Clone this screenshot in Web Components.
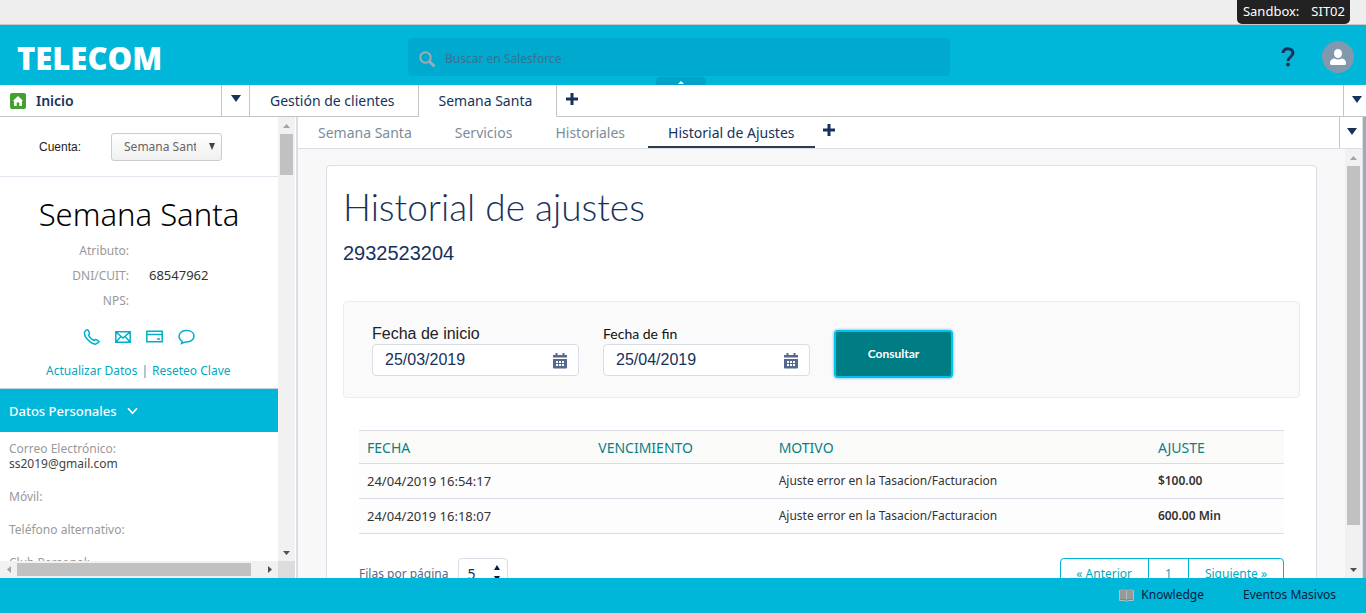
<!DOCTYPE html>
<html lang="es">
<head>
<meta charset="utf-8">
<title>Historial de ajustes</title>
<style>
html,body{margin:0;height:100%}
body{font-family:"Noto Sans","Open Sans",sans-serif;font-size:12px;color:#16325c;
--brand:#00b6d9;--line:#d8dde6;--navy:#16325c;--link:#00a9c0}
</style>
</head>
<body>
<console-app></console-app>
<script>
const base = '*,*::before{box-sizing:border-box}button,input,select{font:inherit;color:inherit;margin:0}button{background:none;border:0;padding:0}a{color:inherit;text-decoration:none}';
function define(name, css, html, setup) {
  const t = document.createElement('template');
  t.innerHTML = `<style>${base}${css}</style>${html}`;
  customElements.define(name, class extends HTMLElement {
    constructor() {
      super();
      this.attachShadow({mode: 'open'}).append(t.content.cloneNode(true));
    }
    connectedCallback() { if (setup) setup(this, this.shadowRoot); }
  });
}

define('down-arrow', ':host{display:block;width:10px;height:7px}svg{display:block}',
  '<svg width="10" height="7" viewBox="0 0 10 7"><path d="M0 0h10L5 7z" fill="#16325c"/></svg>');

define('plus-mark', ':host{display:block;width:12px;height:12px}svg{display:block}',
  '<svg width="12" height="12" viewBox="0 0 12 12"><path d="M4.500 0h3v4.500H12v3H7.500V12h-3V7.500H0v-3h4.500z" fill="#16325c"/></svg>');

define('scroll-bar', `
:host{display:flex;flex-direction:column;width:17px;background:#f1f1f1}
:host([axis=x]){flex-direction:row;width:auto;height:17px}
svg{flex:none;display:block;width:17px;height:17px}
.track{flex:1;display:flex;flex-direction:column;padding:0 2px;min-height:0}
:host([axis=x]) .track{flex-direction:row;padding:2px 0}
.thumb{background:#c1c1c1;flex:0 0 var(--thumb,50%)}
:host([axis=x]) .a,:host([axis=x]) .b{transform:rotate(-90deg)}`,
`<svg class="a" viewBox="0 0 17 17"><path d="M5 11h7L8.500 7z" fill="#a3a3a3"/></svg><div class="track"><div class="thumb"></div></div><svg class="b" viewBox="0 0 17 17"><path d="M5 7h7l-3.500 4z" fill="#505050"/></svg>`);

define('sandbox-strip', `
:host{display:flex;justify-content:flex-end;height:25px;padding-right:16px;background:#eee;border-bottom:1px solid #c9c9c9}
div{display:flex;gap:12px;height:24px;padding:0 5px 0 6px;background:#222;color:#fff;border-radius:0 0 5px 5px;font-size:13px;line-height:23px}`,
`<div><span>Sandbox:</span><span>SIT02</span></div>`);

define('app-header', `
:host{display:grid;grid-template-columns:408px minmax(200px,542px) 1fr;height:60px;background:var(--brand);position:relative;align-items:center}
.logo{padding:5px 0 0 17px;font:800 31px/54px "Open Sans","Noto Sans",sans-serif;color:#fff}
.search{display:flex;align-items:center;gap:9px;height:38px;margin-top:4px;padding-left:11px;background:#00aacf;border-radius:4px}
input{flex:1;border:0;background:none;outline:0;padding:0;height:38px;padding-top:3px}
input::placeholder{color:#39708f;opacity:1}
.search svg{margin-top:4px}
.right{display:flex;justify-content:flex-end;align-items:center;gap:27px;padding:4px 12px 0 0}
.right svg{display:block}
.notch{position:absolute;left:656px;bottom:0;width:50px;height:8px;padding-bottom:1px;background:#00a3c6;border-radius:4px 4px 0 0;display:flex;justify-content:center;align-items:flex-end}`,
`<div class="logo">TELECOM</div>
<label class="search"><svg width="17" height="17" viewBox="0 0 17 17" fill="none" stroke="#9faab5"><circle cx="6.500" cy="6.500" r="5.200" stroke-width="2"/><path d="M10.500 10.500l5 5" stroke-width="2.800"/></svg><input type="search" aria-label="Buscar" placeholder="Buscar en Salesforce"></label>
<div class="right"><button aria-label="Ayuda"><svg width="14" height="20" viewBox="0 0 14 20"><path d="M2 6C2 0 12 .5 12 6c0 3.500-5 3.800-5 8" fill="none" stroke="#16325c" stroke-width="3"/><circle cx="7" cy="17.500" r="2" fill="#16325c"/></svg></button>
<button aria-label="Perfil"><svg width="32" height="32" viewBox="0 0 32 32"><circle cx="16" cy="16" r="16" fill="#8199af"/><ellipse cx="16" cy="12.500" rx="4" ry="4.500" fill="#fff"/><path d="M8 22c0-3 2.500-4.500 4.500-4.500 2 1.200 5 1.200 7 0 2 0 4.500 1.500 4.500 4.500 0 1.500-.5 2-2 2H10c-1.500 0-2-.5-2-2z" fill="#fff"/></svg></button></div>
<div class="notch"><svg width="6" height="3" viewBox="0 0 6 3"><path d="M0 3l3-3 3 3z" fill="#fff"/></svg></div>`);

define('main-tabs', `
:host{display:flex;height:32px;font-size:14px;line-height:31px}
a,button{border-bottom:1px solid #c4c4c4;border-right:1px solid #c4c4c4;background:#fff}
.home{display:flex;align-items:center;gap:10px;width:222px;padding-left:10px;font-weight:600}
.pick{width:28px;display:flex;justify-content:center;align-items:center;padding-bottom:5px}
.tab{padding:0 23px 0 20px}
.tab.on{border-bottom-color:#fff;padding-right:24px}
.add{flex:1;padding:8px 9px 0;border-right:1px solid #c4c4c4;display:flex;align-items:flex-start}
.end{border-right:0;width:22px;display:flex;align-items:center;justify-content:flex-end;padding:0 4px 3px 0}`,
`<a class="home" href="#"><svg width="16" height="16" viewBox="0 0 16 16"><rect width="16" height="16" rx="2" fill="#43a12f"/><path d="M8 3l5.200 5H12v5H9.300V9.500H6.700V13H4V8H2.800z" fill="#fff"/></svg>Inicio</a>
<button class="pick" aria-label="Elegir"><down-arrow></down-arrow></button>
<a class="tab" href="#">Gestión de clientes</a><a class="tab on" href="#">Semana Santa</a>
<button class="add" aria-label="Nueva pestaña"><plus-mark></plus-mark></button>
<button class="end" aria-label="Más pestañas"><down-arrow></down-arrow></button>`);

define('sub-tabs', `
:host{display:flex;height:32px;border-bottom:1px solid var(--line);background:#fff;font-size:14px;line-height:32px;color:#7d8c9b}
a{margin:0 3px 0 0;padding:0 20px;height:31px}
a.on{color:var(--navy);border-bottom:2px solid #2f3c50}
.add{flex:1;padding:7px 5px 0;display:flex;align-items:flex-start}
.end{width:23px;border-left:1px solid #c4c4c4;display:flex;align-items:center;justify-content:center;padding:0 0 3px 2px}`,
`<a href="#">Semana Santa</a><a href="#">Servicios</a><a href="#">Historiales</a><a class="on" href="#">Historial de Ajustes</a>
<button class="add" aria-label="Nueva subpestaña"><plus-mark></plus-mark></button>
<button class="end" aria-label="Más"><down-arrow></down-arrow></button>`);

define('data-field', `
:host{display:block;padding-left:9px;line-height:15px;color:#444;margin-bottom:18px}
.l{color:#999}`,
`<div class="l"><slot name="label"></slot></div><div><slot></slot></div>`);

define('account-panel', `
:host{display:grid;grid-template-columns:1fr 17px;grid-template-rows:1fr 17px;width:298px;flex:none;border-right:2px solid var(--line);padding-right:1px;background:#fff;min-height:0}
.body{overflow:hidden;min-height:0}
.pick{display:flex;align-items:center;height:60px;padding-left:39px;gap:30px;border-bottom:1px solid #e0e5ee;font-family:"Liberation Sans",sans-serif;color:#222}
.sel{position:relative}
select{appearance:none;display:block;width:111px;height:28px;border:1px solid #ccc;border-radius:3px;background:linear-gradient(#fff,#f0f0f0);padding:0 25px 0 12px;font-family:"Noto Sans",sans-serif;color:#666}
.sel svg{position:absolute;right:6px;top:10px;pointer-events:none}
h1{margin:17px 0 8px;font-weight:300;font-size:31px;line-height:41px;color:#000;text-align:center}
dl{display:grid;grid-template-columns:129px 1fr;column-gap:20px;row-gap:10px;line-height:15px;margin:0;color:#333}
dt{text-align:right;color:#999}dd{margin:0;min-height:15px;font-size:13px}
.icons{display:flex;justify-content:center;gap:15px;margin:20px 0 16px;height:18px}
.icons svg{display:block}
.links{display:flex;padding-left:46px;color:var(--link);line-height:18px;gap:4px;margin-bottom:8px}
h2{margin:0;display:flex;align-items:center;gap:10px;height:44px;padding-left:9px;border-top:1px solid #c9d3dd;background:var(--brand);color:#fff;font-size:13px;font-weight:500}
.fields{padding-top:9px}
.corner{background:#dcdcdc}`,
`<div class="body">
<div class="pick"><label for="acc">Cuenta:</label><div class="sel"><select id="acc"><option>Semana Santa</option></select><svg width="8" height="7" viewBox="0 0 8 7"><path d="M1 0h6L4 7z" fill="#444"/></svg></div></div>
<h1>Semana Santa</h1>
<dl><dt>Atributo:</dt><dd></dd><dt>DNI/CUIT:</dt><dd>68547962</dd><dt>NPS:</dt><dd></dd></dl>
<div class="icons">
<svg width="17" height="18" viewBox="0 0 17 18" fill="none" stroke="#00b0c8" stroke-width="1.500"><path d="M3.500 2L1.600 3.800C.6 8.500 7 15.800 12.500 16.200l3-1.700c.7-.6.500-1.200 0-1.600l-2.500-1.300c-.8-.3-1.200 0-1.800.9C8.500 11.500 6.500 9.500 5.500 7c1.200-.6 1.300-1 1-1.900L5.300 2.500C4.900 1.600 4.200 1.400 3.500 2z"/></svg>
<svg width="16" height="18" viewBox="0 0 16 18" fill="none" stroke="#00b0c8" stroke-width="1.500"><path d="M.8 3.800h14.400v10.500H.8zM1 4l7 6 7-6M1 14l5-5.500M15 14l-5-5.500"/></svg>
<svg width="17" height="18" viewBox="0 0 17 18" fill="none" stroke="#00b0c8" stroke-width="1.500"><path d="M.8 3.300h15.400v10.400H.8zM1 6.500h15M11 11h3"/></svg>
<svg width="17" height="18" viewBox="0 0 17 18" fill="none" stroke="#00b0c8" stroke-width="1.500"><path d="M4.200 13.300C-1 10 .5 2.500 8.500 2.500c5 0 7.500 2.800 7.500 5.800 0 3.700-4 6.200-8.500 5.600L3.500 15.500z"/></svg></div>
<div class="links"><a href="#">Actualizar Datos</a><span>|</span><a href="#">Reseteo Clave</a></div>
<h2>Datos Personales <svg width="11" height="8" viewBox="0 0 11 8"><path d="M1 1.200l4.500 5 4.500-5" fill="none" stroke="#fff" stroke-width="1.700"/></svg></h2>
<div class="fields"><data-field><span slot="label">Correo Electrónico:</span>ss2019@gmail.com</data-field><data-field><span slot="label">Móvil:</span></data-field><data-field><span slot="label">Teléfono alternativo:</span></data-field><data-field><span slot="label">Club Personal:</span></data-field></div>
</div><scroll-bar style="--thumb:10%"></scroll-bar><scroll-bar axis="x" style="--thumb:96%"></scroll-bar><div class="corner"></div>`);

define('date-field', `
:host{display:block;width:207px}
label{display:block;font:16px/20px "Liberation Sans",sans-serif;color:#222}
:host([compact]) label{font:14px/20px Lato,sans-serif;color:#111}
.box{display:flex;align-items:center;height:32px;border:1px solid var(--line);border-radius:4px;background:#fff;padding:0 11px 0 12px}
input{flex:1;min-width:0;border:0;outline:0;padding:0;height:28px;font:16px/28px "Liberation Sans",sans-serif;color:#16325c;background:none}
svg{flex:none;margin-top:2px}`,
`<label for="d"></label><div class="box"><input id="d" type="text"><svg width="14" height="16" viewBox="0 0 14 16"><path fill="#54698d" fill-rule="evenodd" d="M2.500 0h2v2h5V0h2v2H14v2.500H0V2h2.500zM0 6h14v8.500q0 1-1 1H1q-1 0-1-1zM3 8v2h2V8zM6 8v2h2V8zM9 8v2h2V8zM3 11v2h2v-2zM6 11v2h2v-2zM9 11v2h2v-2z"/></svg></div>`,
(el, r) => { r.querySelector('label').textContent = el.getAttribute('label'); r.querySelector('input').value = el.getAttribute('value'); });

define('adjust-table', `
:host{display:block;margin:32px 16px 0}
table{width:100%;table-layout:fixed;border-collapse:collapse;border-top:1px solid var(--line);background:#fdfdfd;color:#333}
th{height:33px;padding:0 8px;text-align:left;font-weight:400;font-size:14px;color:#0b7f86;background:#fafaf9;border-bottom:1px solid var(--line)}
td{height:35px;padding:0 8px 1px;border-bottom:1px solid var(--line)}
td:first-child{font-size:13px}
td:last-child{font-weight:600}`,
`<table><colgroup><col style="width:25%"><col style="width:19.500%"><col style="width:41%"><col></colgroup><thead><tr><th>FECHA</th><th>VENCIMIENTO</th><th>MOTIVO</th><th>AJUSTE</th></tr></thead>
<tbody><tr><td>24/04/2019 16:54:17</td><td></td><td>Ajuste error en la Tasacion/Facturacion</td><td>$100.00</td></tr>
<tr><td>24/04/2019 16:18:07</td><td></td><td>Ajuste error en la Tasacion/Facturacion</td><td>600.00 Min</td></tr></tbody></table>`);

define('table-pager', `
:host{display:flex;justify-content:space-between;align-items:flex-start;margin:24px 16px 0}
.rows{display:flex;align-items:center;gap:10px;line-height:32px;color:#54698d}
.num{display:flex;align-items:center;justify-content:space-between;width:50px;height:32px;border:1px solid var(--line);border-radius:4px;padding:0 6px 0 8px;background:#fff}
input{width:16px;height:28px;border:0;outline:0;padding:0;background:none;color:#16325c;font-size:14px;line-height:28px}
nav{display:flex;border:1px solid var(--brand);border-radius:4px;line-height:30px;color:var(--link)}
nav a{padding:0 16px 0 15px}
nav a+a{padding-left:16px;border-left:1px solid var(--brand)}`,
`<div class="rows"><label for="n">Filas por página</label><div class="num"><input id="n" type="text" value="5"><svg width="8" height="18" viewBox="0 0 8 18"><path d="M1 5h6L4 0zM1 11h6l-3 5z" fill="#061c3f"/></svg></div></div>
<nav><a href="#">« Anterior</a><a href="#">1</a><a href="#">Siguiente »</a></nav>`);

define('history-card', `
:host{display:block;margin:16px 28px 0;padding:16px;background:#fff;border:1px solid var(--line);border-radius:4px}
h1{margin:0;font:300 37px/50px Lato,sans-serif;color:var(--navy)}
.id{font:20px/24px "Liberation Sans",sans-serif;color:var(--navy);margin:9px 0 36px}
form{display:flex;align-items:flex-start;gap:24px;height:97px;padding:22px 28px;border:1px solid #ededed;border-radius:4px;background:#fafafa}
button{width:119px;height:48px;margin-top:6px;border:2px solid #00c3ea;border-radius:4px;background:#007c85;color:#fff;font:700 12px/44px Lato,sans-serif;box-shadow:0 0 3px #4ba3f5}`,
`<h1>Historial de ajustes</h1><div class="id">2932523204</div>
<form><date-field label="Fecha de inicio" value="25/03/2019"></date-field><date-field compact label="Fecha de fin" value="25/04/2019"></date-field><button type="button">Consultar</button></form>
<adjust-table></adjust-table><table-pager></table-pager>`);

define('work-area', `
:host{display:flex;flex-direction:column;flex:1;min-width:0;min-height:0;border-right:1px solid var(--line)}
.row{flex:1;display:flex;min-height:0;background:#f8f8f8}
.view{flex:1;min-width:0;overflow:hidden}`,
`<sub-tabs></sub-tabs><div class="row"><div class="view"><slot></slot></div><scroll-bar style="--thumb:91%"></scroll-bar></div>`);

define('app-footer', `
:host{display:flex;justify-content:flex-end;align-items:center;gap:39px;height:35px;padding:0 30px 2px 0;background:var(--brand);color:#061c3f}
a{display:flex;align-items:center;gap:7px}`,
`<a href="#"><svg width="15" height="14" viewBox="0 0 15 14"><path d="M1 1h5l1.500 1L9 1h5v10H9l-1.500 1L6 11H1z" fill="#999"/><path d="M.5 2v10.500H6l1.500 1 1.500-1h5.500V2M7.500 2v9.500" fill="none" stroke="#b4bcc0"/></svg>Knowledge</a><a href="#">Eventos Masivos</a>`);

define('console-app', `
:host{display:flex;flex-direction:column;height:100vh;overflow:hidden;background:#fff}
.mid{flex:1;display:flex;min-height:0;border-right:3px solid #9faab5}`,
`<sandbox-strip></sandbox-strip><app-header></app-header><main-tabs></main-tabs>
<div class="mid"><account-panel></account-panel><work-area><history-card></history-card></work-area></div><app-footer></app-footer>`);
</script>
</body>
</html>
